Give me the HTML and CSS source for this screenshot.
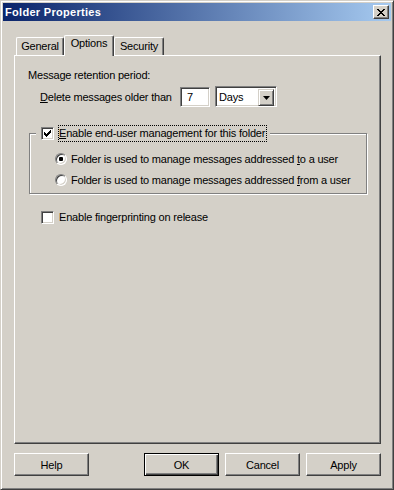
FILE: index.html
```html
<!doctype html>
<html lang="en">
  <head>
    <meta charset="UTF-8" />
    <title>Folder Properties</title>
    <link rel="stylesheet" href="styles.css">
  </head>
  <body>
    <div class="window">
      <div class="titlebar">
        <span class="title">Folder Properties</span>
        <div class="close_btn">
          <svg width="8" height="7" viewBox="0 0 8 7">
            <path d="M0 0h2v1h1v1h2V1h1V0h2v1H7v1H6v1H5v1h1v1h1v1h1v1H6V6H5V5H3v1H2v1H0V6h1V5h1V4h1V3H2V2H1V1H0z" fill="#000"/>
          </svg>
        </div>
      </div>

      <div class="client">
        <div class="tabs">
          <div class="tab">General</div>
          <div class="tab active">Options</div>
          <div class="tab">Security</div>
        </div>

        <div class="tab_panel">
          <div class="section_label">Message retention period:</div>
          <div class="retention_row">
            <span class="field_label"><u>D</u>elete messages older than</span>
            <div class="textbox">7</div>
            <div class="combo">
              <span class="combo_value">Days</span>
              <span class="combo_btn">
                <svg width="7" height="4" viewBox="0 0 7 4"><path d="M0 0h7L3.5 4z" fill="#000"/></svg>
              </span>
            </div>
          </div>

          <fieldset class="group">
            <legend class="group_legend">
              <span class="checkbox">
                <svg width="7" height="7" viewBox="0 0 7 7">
                  <path d="M0 2h1v3H0zM1 3h1v3H1zM2 4h1v3H2zM3 3h1v3H3zM4 2h1v3H4zM5 1h1v3H5zM6 0h1v3H6z" fill="#000"/>
                </svg>
              </span>
              <span class="focus_label"><u>E</u>nable end-user management for this folder</span>
            </legend>
            <div class="radio_row">
              <span class="radio checked"></span>
              <span>Folder is used to manage messages addressed <u>t</u>o a user</span>
            </div>
            <div class="radio_row">
              <span class="radio"></span>
              <span>Folder is used to manage messages addressed <u>f</u>rom a user</span>
            </div>
          </fieldset>

          <div class="check_row">
            <span class="checkbox"></span>
            <span>Enable fingerprinting on release</span>
          </div>
        </div>

        <div class="buttons">
          <button class="btn help">Help</button>
          <button class="btn default">OK</button>
          <button class="btn">Cancel</button>
          <button class="btn">Apply</button>
        </div>
      </div>
    </div>
  </body>
</html>
```

FILE: styles.css
```css
:root {
  --face: #d4d0c8;
  --shadow: #808080;
  --dark: #404040;
  --light: #ffffff;
}

body {
  margin: 0;
  font-family: "Liberation Sans", Arial, sans-serif;
  font-size: 11px;
  letter-spacing: -0.2px;
  color: #000;
}

.window {
  width: 394px;
  height: 490px;
  box-sizing: border-box;
  background-color: var(--face);
  border: 1px solid;
  border-color: var(--face) var(--dark) var(--dark) var(--face);
  box-shadow: inset 1px 1px var(--light), inset -1px -1px var(--shadow);
  padding: 2px;
}

/* title bar */
.titlebar {
  height: 18px;
  display: flex;
  align-items: center;
  padding: 0 2px;
  background: linear-gradient(to right, #0a246a, #a6caf0);
}
.title {
  color: #fff;
  font-weight: bold;
  font-size: 11px;
  letter-spacing: 0.3px;
}
.close_btn {
  margin-left: auto;
  width: 16px;
  height: 14px;
  box-sizing: border-box;
  display: flex;
  align-items: center;
  justify-content: center;
  background-color: var(--face);
  border: 1px solid;
  border-color: var(--light) var(--dark) var(--dark) var(--light);
  box-shadow: inset -1px -1px var(--shadow);
}

.client {
  padding: 14px 10px 0 11px;
}

/* tabs */
.tabs {
  display: flex;
  align-items: flex-end;
  height: 20px;
  padding-left: 2px;
}
.tab {
  box-sizing: border-box;
  width: 48px;
  height: 18px;
  padding-top: 2px;
  line-height: 13px;
  text-align: center;
  border-top: 1px solid var(--light);
  border-left: 1px solid var(--light);
  border-right: 1px solid var(--dark);
  border-radius: 2px 2px 0 0;
  box-shadow: inset -1px 0 var(--shadow);
}
.tab + .tab {
  width: 50px;
}
.tab.active {
  height: 21px;
  margin-bottom: -1px;
  padding-top: 1px;
  position: relative;
  z-index: 1;
  background-color: var(--face);
}

.tab_panel {
  box-sizing: border-box;
  height: 389px;
  padding: 13px;
  border: 1px solid;
  border-color: var(--light) var(--dark) var(--dark) var(--light);
  box-shadow: inset -1px -1px var(--shadow);
}

.section_label {
  line-height: 13px;
}

.retention_row {
  display: flex;
  align-items: center;
  height: 21px;
  margin-top: 4px;
  padding-left: 12px;
}
.field_label {
  flex: none;
  width: 140px;
}

.textbox,
.combo {
  box-sizing: border-box;
  background-color: #fff;
  border: 1px solid;
  border-color: var(--shadow) var(--light) var(--light) var(--shadow);
  box-shadow: inset 1px 1px var(--dark), inset -1px -1px var(--face);
}
.textbox {
  width: 30px;
  height: 20px;
  padding: 2px 0 0 6px;
  line-height: 14px;
}
.combo {
  width: 62px;
  height: 21px;
  margin-left: 5px;
  display: flex;
  padding: 2px;
}
.combo_value {
  flex: 1;
  padding-left: 1px;
  line-height: 17px;
}
.combo_btn {
  box-sizing: border-box;
  width: 16px;
  height: 17px;
  display: flex;
  align-items: center;
  justify-content: center;
  background-color: var(--face);
  border: 1px solid;
  border-color: var(--face) var(--dark) var(--dark) var(--face);
  box-shadow: inset 1px 1px var(--light), inset -1px -1px var(--shadow);
}

/* group box */
.group {
  margin: 18px 0 0 1px;
  padding: 0 0 5px 6px;
  min-width: 0;
  border: 1px solid var(--shadow);
  box-shadow: inset 1px 1px var(--light), 1px 1px 0 var(--light);
}
.group_legend {
  display: flex;
  align-items: center;
  padding: 0 3px 0 5px;
  background-color: var(--face);
}
.focus_label {
  margin-left: 4px;
  padding: 1px 1px 1px 0;
  line-height: 13px;
  border: 1px dotted #000;
}

.checkbox {
  flex: none;
  box-sizing: border-box;
  width: 13px;
  height: 13px;
  display: flex;
  align-items: center;
  justify-content: center;
  background-color: #fff;
  border: 1px solid;
  border-color: var(--shadow) var(--light) var(--light) var(--shadow);
  box-shadow: inset 1px 1px var(--dark), inset -1px -1px var(--face);
}

.radio_row {
  display: flex;
  align-items: center;
  gap: 4px;
  height: 16px;
  padding-left: 19px;
  margin-top: 5px;
}
.radio_row:first-of-type {
  margin-top: 9px;
}
.radio {
  flex: none;
  box-sizing: border-box;
  width: 12px;
  height: 12px;
  border-radius: 50%;
  background-color: #fff;
  border: 1px solid;
  border-color: var(--shadow) var(--light) var(--light) var(--shadow);
  box-shadow: inset 1px 1px var(--dark), inset -1px -1px var(--face);
  display: flex;
  align-items: center;
  justify-content: center;
}
.radio.checked::after {
  content: "";
  width: 4px;
  height: 4px;
  border-radius: 1px;
  background-color: #000;
}

.check_row {
  display: flex;
  align-items: center;
  gap: 5px;
  height: 16px;
  margin-top: 15px;
  padding-left: 13px;
}

/* dialog buttons */
.buttons {
  display: flex;
  gap: 6px;
  margin-top: 9px;
}
.btn {
  box-sizing: border-box;
  width: 75px;
  height: 23px;
  padding: 0;
  font-family: inherit;
  font-size: 11px;
  letter-spacing: inherit;
  color: #000;
  background-color: var(--face);
  border: 1px solid;
  border-color: var(--light) var(--dark) var(--dark) var(--light);
  box-shadow: inset -1px -1px var(--shadow);
}
.btn.help {
  margin-right: auto;
}
.btn.default {
  border: 1px solid #000;
  box-shadow: inset 1px 1px var(--light), inset -1px -1px var(--dark), inset -2px -2px var(--shadow);
}
```
